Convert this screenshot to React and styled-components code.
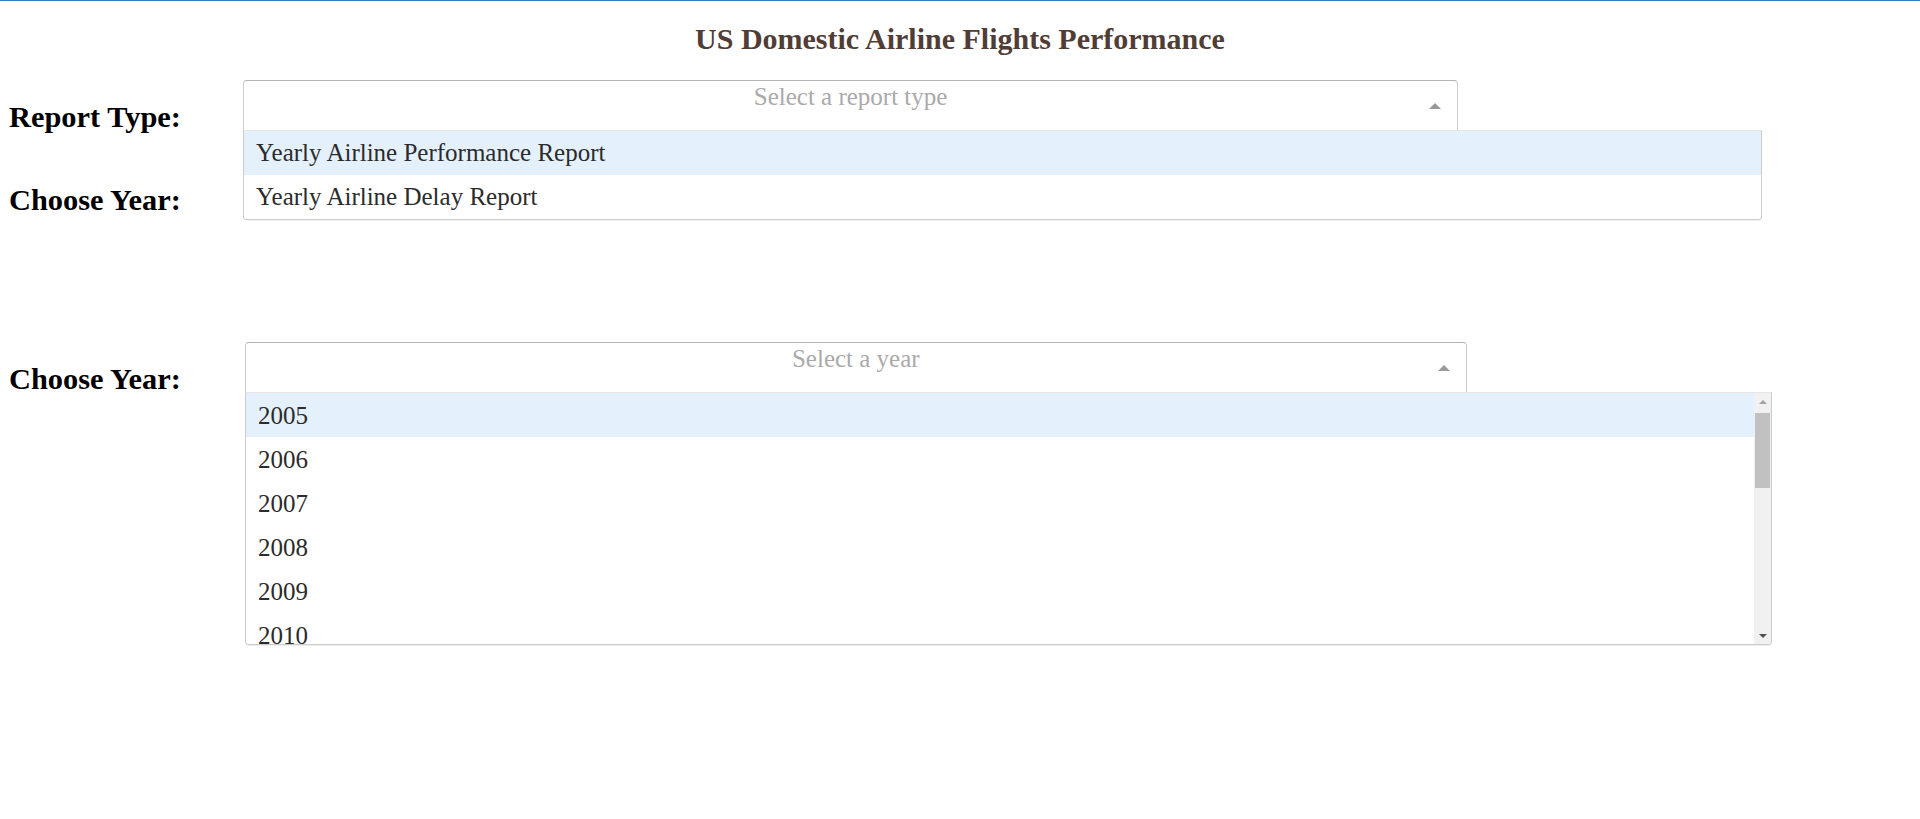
import React from 'react';
import styled, { createGlobalStyle } from 'styled-components';

const GlobalStyle = createGlobalStyle`
  html, body { margin: 0; padding: 0; background: #fff; }
  body { font-family: 'Liberation Serif', 'Times New Roman', serif; }
`;

const Page = styled.div`
  box-sizing: border-box;
  min-height: 819px;
  padding: 0 8px;
  border-top: 1px solid #3f78c0;
`;

const Title = styled.h1`
  margin: 20px 0 21px;
  font-size: 30px;
  line-height: 35px;
  font-weight: bold;
  text-align: center;
  color: #503d36;
`;

const Row = styled.div`
  display: flex;
  align-items: flex-start;
  margin-top: ${(p) => p.$gap || 0}px;
`;

const Label = styled.h2`
  box-sizing: border-box;
  flex: 0 0 232px;
  margin: 23px 0 26px;
  padding-left: 1px;
  font-size: 30.4px;
  line-height: 34px;
  font-weight: bold;
  color: #000;
  white-space: nowrap;
`;

const DropdownWrap = styled.div`
  position: relative;
  box-sizing: content-box;
  width: ${(p) => p.$width}px;
  padding: 3px;
  margin-left: ${(p) => p.$shift || 0}px;
  font-size: 25px;
`;

const Control = styled.div`
  box-sizing: border-box;
  display: flex;
  width: 80%;
  height: 51px;
  background: #fff;
  border: 1px solid #ccc;
  border-color: #b3b3b3 #ccc #d9d9d9;
  border-radius: 4px 4px 0 0;
`;

const Placeholder = styled.div`
  flex: 1;
  min-width: 0;
  padding-left: 37px;
  line-height: 32px;
  text-align: center;
  color: #aaa;
  white-space: nowrap;
`;

const ArrowZone = styled.div`
  flex: 0 0 30px;
  padding-right: 7px;
  display: flex;
  align-items: center;
  justify-content: center;
`;

const Arrow = styled.span`
  width: 0;
  height: 0;
  border-style: solid;
  border-width: 0 6px 6px;
  border-color: transparent transparent #999;
`;

const Menu = styled.div`
  position: absolute;
  top: 53px;
  left: 3px;
  right: 3px;
  z-index: 10;
  display: flex;
  background: #fff;
  border: 1px solid #ccc;
  border-top-color: #e6e6e6;
  border-radius: 0 0 4px 4px;
  box-shadow: 0 1px 0 rgba(0, 0, 0, 0.06);
  overflow: hidden;
`;

const OptionList = styled.div`
  flex: 1;
  min-width: 0;
  max-height: ${(p) => (p.$max ? `${p.$max}px` : 'none')};
  overflow: hidden;
`;

const Option = styled.div`
  height: 44px;
  line-height: ${(p) => (p.$tall ? 46 : 44)}px;
  padding: 0 12px;
  color: #2b2b2b;
  background: ${(p) => (p.$focused ? '#e4f1fd' : '#fff')};
  white-space: nowrap;
`;

const Scrollbar = styled.div`
  flex: 0 0 17px;
  display: flex;
  flex-direction: column;
  background: #f1f1f1;
`;

const ScrollButton = styled.div`
  height: 17px;
  display: flex;
  align-items: center;
  justify-content: center;
`;

const ScrollGlyph = styled.span`
  width: 0;
  height: 0;
  border-style: solid;
  border-width: ${(p) => (p.$dir === 'up' ? '0 4px 4px' : '4px 4px 0')};
  border-color: ${(p) =>
    p.$dir === 'up'
      ? 'transparent transparent #a3a3a3'
      : '#505050 transparent transparent'};
`;

const Track = styled.div`
  flex: 1;
  padding-top: 3px;
`;

const Thumb = styled.div`
  height: 75px;
  margin: 0 1px;
  background: #c1c1c1;
`;

function Dropdown({ placeholder, options = [], open, width, shift, maxHeight, scroll }) {
  return (
    <DropdownWrap $width={width} $shift={shift}>
      <Control>
        <Placeholder>{placeholder}</Placeholder>
        <ArrowZone>
          <Arrow />
        </ArrowZone>
      </Control>
      {open && (
        <Menu>
          <OptionList $max={maxHeight}>
            {options.map((o, i) => (
              <Option key={o} $focused={i === 0} $tall={scroll}>
                {o}
              </Option>
            ))}
          </OptionList>
          {scroll && (
            <Scrollbar>
              <ScrollButton>
                <ScrollGlyph $dir="up" />
              </ScrollButton>
              <Track>
                <Thumb />
              </Track>
              <ScrollButton>
                <ScrollGlyph $dir="down" />
              </ScrollButton>
            </Scrollbar>
          )}
        </Menu>
      )}
    </DropdownWrap>
  );
}

const reportOptions = ['Yearly Airline Performance Report', 'Yearly Airline Delay Report'];
const years = Array.from({ length: 16 }, (_, i) => String(2005 + i));

export default function App() {
  return (
    <>
      <GlobalStyle />
      <Page>
        <Title>US Domestic Airline Flights Performance</Title>
        <Row>
          <Label>Report Type:</Label>
          <Dropdown
            placeholder="Select a report type"
            options={reportOptions}
            open
            width={1519}
          />
        </Row>
        <Row>
          <Label>Choose Year:</Label>
          <Dropdown placeholder="Select a year" width={1519} />
        </Row>
        <Row $gap={96}>
          <Label>Choose Year:</Label>
          <Dropdown
            placeholder="Select a year"
            options={years}
            open
            width={1527}
            shift={2}
            maxHeight={251}
            scroll
          />
        </Row>
      </Page>
    </>
  );
}
